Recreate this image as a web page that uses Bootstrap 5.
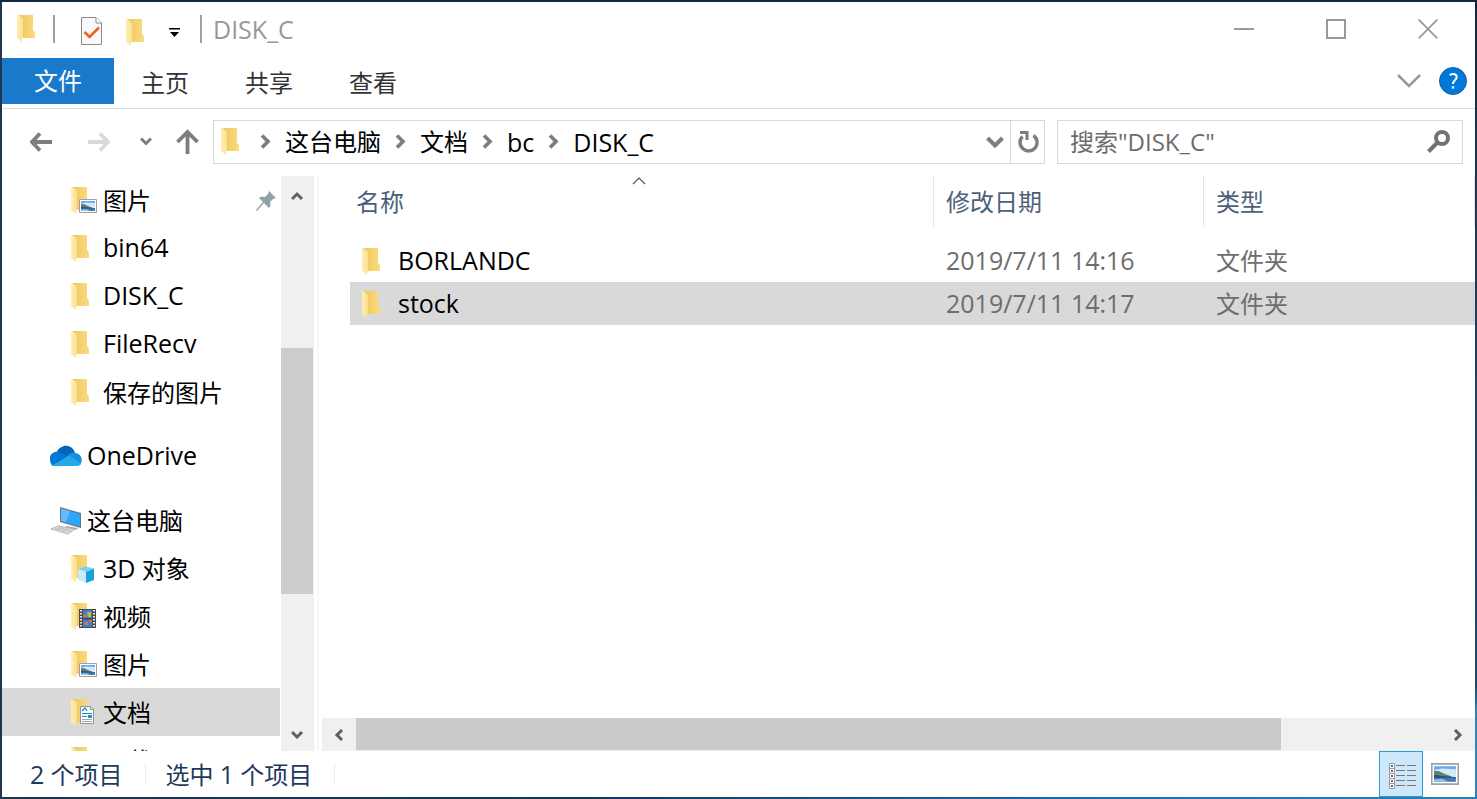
<!DOCTYPE html>
<html lang="zh-CN">
<head>
<meta charset="utf-8">
<meta name="viewport" content="width=device-width, initial-scale=1">
<title>DISK_C</title>
<link href="https://cdn.jsdelivr.net/npm/bootstrap@5.3.0/dist/css/bootstrap.min.css" rel="stylesheet">
<style>
body{font-family:"Open Sans","Noto Sans CJK SC",sans-serif;font-size:24px;line-height:32px;color:#000;background:#fff}
.frame{padding:2px;background:linear-gradient(90deg,#22344e 0,#14385a 40%,#1a6cb0 75%,#2a80b4 100%) bottom/100% 2px no-repeat,linear-gradient(#22344e,#22344e) left/2px 100% no-repeat,linear-gradient(#14253f 0,#1f3d5c 40%,#1f4a70 86%,#2f84b4 89%)}
.frame-top{height:2px;margin:-2px -2px 0;background:#14253f}
.window{background:#fff}
button{border:0;background:none;padding:0;color:inherit}
a{color:inherit;text-decoration:none}
svg{display:block;flex:none}
.latin{font-size:25px}
.titlebar{height:56px;color:#999;padding:0 1px 2px 15px}
.bar{width:2px;height:28px;background:#a0a0a0;flex:none}
.bar-a{margin:0 26px 0 17px}
.bar-b{margin:0 11px 0 20px}
.sysbtn{width:92px;height:54px}
.ribbon{height:51px;border-bottom:1px solid #dadbdc;color:#333}
.ribbon a{width:104px;height:46px;padding:9px 2px 0 0;text-align:center}
.ribbon a.file{width:112px;background:#1979ca;color:#fff;padding:7px 0 0}
.ribbon-end{gap:18px}
.addr{padding:11px 12px 12px 0}
.history{width:211px;padding-left:28px}
.forward{margin:0 28px 0 47px}
.box{height:44px;border:1px solid #d9d9d9;background:#fff}
.crumbs{gap:14px;padding-left:7px}
.crumbs .start{margin-right:6px}
.refresh{width:34px;border-left:1px solid #d9d9d9;height:42px}
.search{width:406px}
.search input{border:0;outline:0;background:none;font-size:24px;padding:0 0 0 12px;color:#6d6d6d}
.search input::placeholder{color:#6d6d6d;opacity:1}
.tree{width:278px}
.tree a{height:48px;padding:2px 0 0 69px;flex:none}
.tree a.root{padding-left:47px;margin-top:16px}
.tree .latin{padding-bottom:4px}
.tree .pic{width:32px}
.tree .root .pic{width:38px}
.picked,.picked td{background:#d9d9d9!important}
.vscroll{width:33px;background:#f0f0f0;margin-left:1px}
.vscroll .thumb{width:32px;background:#cdcdcd}
.vscroll button{height:32px}
.split{width:2px;background:#f7f7f7;margin:0 3px}
.pane{padding-left:28px}
.files{table-layout:fixed;border-collapse:separate;border-spacing:0;width:100%}
.files th{height:51px;font-weight:400;color:#4c607a;padding:2px 0 0 12px;border-right:1px solid #e5e5e5;position:relative}
.files th:first-child{padding-left:6px}
.files td{height:43px;padding:0 0 0 12px;color:#6d6d6d}
.files td:first-child{color:#000}
.files td.kind{padding-top:2px}
.files tbody::before{content:"";display:block;height:12px}
.files .pic{width:36px;padding-top:2px}
.sort{position:absolute;top:1px;left:0;right:6px}
.hscroll{height:33px;background:#f0f0f0}
.hscroll .thumb{height:32px;background:#cacaca}
.hscroll button{width:34px}
.status{height:46px;color:#1e395b}
.status .count{padding:0 22px 0 28px}
.status .chosen{padding:0 22px 0 20px}
.tick{width:1px;height:22px;background:#ededed}
.view{width:44px;height:46px}
.view.on{background:#cce8fa;border:1px solid #26a0da;padding:3px 0 0 3px}
</style>
</head>
<body>
<svg width="0" height="0" class="position-absolute" aria-hidden="true">
<defs>
<linearGradient id="gold" x1="0" x2="1"><stop offset="0" stop-color="#ecc75f"/><stop offset="1" stop-color="#fbdb7d"/></linearGradient>
<linearGradient id="pale" x1="0" x2="1"><stop offset="0" stop-color="#ffefb4"/><stop offset="1" stop-color="#fbe08c"/></linearGradient>
<symbol id="folder" viewBox="0 0 19 27"><path d="M1 0H16V15L18 17V23H5V4z" fill="url(#gold)"/><path d="M0 0H1L6 4V23H5V27L0 23z" fill="url(#pale)"/></symbol>
<symbol id="photo" viewBox="0 0 18 14"><path d="M.5.5H17.5V13.5H.5z" fill="#fff" stroke="#a0a0a0"/><path d="M2 2H16V8H2z" fill="#6ba6f6"/><path d="M2 4.500L7 3.500L16 4V8.500H6z" fill="#d3e9fb"/><path d="M2 5L5 5L9 7L13 8.500V9.500H2z" fill="#5f8474"/><path d="M2 7.500L9 8.500L16 9V10H2z" fill="#2f5568"/><path d="M2 9.500H16V12H2z" fill="#3f78bf"/><path d="M2 10.500L7 10L11 12H2z" fill="#8fc4e4"/></symbol>
</defs>
</svg>
<div class="frame vh-100 d-flex flex-column">
<div class="frame-top"></div>
<div class="window d-flex flex-column flex-grow-1 overflow-hidden">

<header class="titlebar d-flex align-items-center flex-shrink-0">
  <svg width="19" height="27"><use href="#folder"/></svg>
  <span class="bar bar-a"></span>
  <button type="button" class="mt-1" aria-label="属性"><svg width="21" height="28" viewBox="0 0 21 28"><path d="M.5.5H15L20.500 6V27.500H.5z" fill="#f8f9fb" stroke="#8a8a8a"/><path d="M15 .5V6H20.500" fill="#fff" stroke="#8a8a8a"/><path d="M3.500 15L8.500 20L18 10.500" fill="none" stroke="#f26318" stroke-width="2.600"/></svg></button>
  <button type="button" class="ms-4 mt-2" aria-label="新建文件夹"><svg width="19" height="27"><use href="#folder"/></svg></button>
  <button type="button" class="ms-4 mt-2" aria-label="自定义快速访问工具栏"><svg width="11" height="10" viewBox="0 0 11 10"><path d="M0 0H11V1.500H0zM1 4H10L5.500 9z" fill="#000"/></svg></button>
  <span class="bar bar-b"></span>
  <span class="latin flex-grow-1">DISK_C</span>
  <button type="button" class="sysbtn d-flex justify-content-center align-items-center" aria-label="最小化"><svg width="20" height="20"><path d="M0 10H20" stroke="#999" stroke-width="2"/></svg></button>
  <button type="button" class="sysbtn d-flex justify-content-center align-items-center" aria-label="最大化"><svg width="20" height="20"><path d="M1 1H19V19H1z" fill="none" stroke="#999" stroke-width="2"/></svg></button>
  <button type="button" class="sysbtn d-flex justify-content-center align-items-center" aria-label="关闭"><svg width="20" height="20"><path d="M.7.7L19.300 19.300M19.300.7L.7 19.300" stroke="#999" stroke-width="1.800"/></svg></button>
</header>

<nav class="ribbon d-flex flex-shrink-0">
  <a href="#" class="file">文件</a><a href="#">主页</a><a href="#">共享</a><a href="#">查看</a>
  <div class="ribbon-end ms-auto d-flex align-items-center me-2 pb-1">
    <button type="button" aria-label="展开功能区"><svg width="24" height="14"><path d="M1 1L12 12L23 1" fill="none" stroke="#999" stroke-width="2.500"/></svg></button>
    <button type="button" aria-label="帮助"><svg width="28" height="28" viewBox="0 0 28 28"><circle cx="14" cy="14" r="13.500" fill="#0078d7" stroke="#1760a4"/><path d="M10.700 8.200C14.500 5.800 18 7.400 17.700 10.400C17.500 13 14 13.200 14 17" fill="none" stroke="#fff" stroke-width="2"/><path d="M12.800 19.200h2.400v2.400h-2.400z" fill="#fff"/></svg></button>
  </div>
</nav>

<div class="addr d-flex align-items-center flex-shrink-0">
  <div class="history d-flex align-items-center">
    <button type="button" aria-label="后退"><svg width="23" height="20"><path d="M2 10H22M10 1.500L2 10L10 18.500" fill="none" stroke="#7d7d7d" stroke-width="3.800"/></svg></button>
    <button type="button" class="forward" aria-label="前进"><svg width="12" height="20" class="overflow-visible"><path d="M-12 10H8M0 1.500L8 10L0 18.500" fill="none" stroke="#d9d9d9" stroke-width="3.800"/></svg></button>
    <button type="button" aria-label="最近浏览的位置"><svg width="12" height="9"><path d="M1 1.500L6 6.500L11 1.500" fill="none" stroke="#7d7d7d" stroke-width="3"/></svg></button>
    <button type="button" class="ms-4" aria-label="上移"><svg width="23" height="25"><path d="M11.500 25V3M1.500 13L11.500 3L21.500 13" fill="none" stroke="#7d7d7d" stroke-width="3.800"/></svg></button>
  </div>
  <div class="box d-flex align-items-center flex-grow-1 me-2">
    <nav class="crumbs d-flex align-items-center flex-grow-1">
      <svg width="19" height="27" class="start"><use href="#folder"/></svg>
      <svg width="11" height="15"><path d="M2 1.500L8 7.500L2 13.500" fill="none" stroke="#7d7d7d" stroke-width="3.600"/></svg>
      <a href="#">这台电脑</a>
      <svg width="11" height="15"><path d="M2 1.500L8 7.500L2 13.500" fill="none" stroke="#7d7d7d" stroke-width="3.600"/></svg>
      <a href="#">文档</a>
      <svg width="11" height="15"><path d="M2 1.500L8 7.500L2 13.500" fill="none" stroke="#7d7d7d" stroke-width="3.600"/></svg>
      <a href="#" class="latin">bc</a>
      <svg width="11" height="15"><path d="M2 1.500L8 7.500L2 13.500" fill="none" stroke="#7d7d7d" stroke-width="3.600"/></svg>
      <a href="#" class="latin">DISK_C</a>
    </nav>
    <button type="button" class="me-1 pe-1" aria-label="以前的位置"><svg width="16" height="13" class="overflow-visible"><path d="M1.500 3L9 10.500L16.500 3" fill="none" stroke="#7d7d7d" stroke-width="4"/></svg></button>
    <button type="button" class="refresh d-flex align-items-center justify-content-center" aria-label="刷新"><svg width="22" height="22" viewBox="0 0 22 22"><path d="M16.500 4.500A8.500 8.500 0 1 1 5.500 5.500" fill="none" stroke="#7d7d7d" stroke-width="3.400"/><path d="M3 0H11.500V9H8.500V3H3z" fill="#7d7d7d"/></svg></button>
  </div>
  <div class="search box d-flex align-items-center ms-1 pe-2">
    <input type="search" class="flex-grow-1 w-100" aria-label="搜索" placeholder='搜索"DISK_C"'>
    <button type="button" class="me-1" aria-label="开始搜索"><svg width="23" height="23"><circle cx="15" cy="8" r="6" fill="none" stroke="#737373" stroke-width="4"/><path d="M11 12L1.500 21.500" stroke="#737373" stroke-width="4"/></svg></button>
  </div>
</div>

<main class="d-flex flex-grow-1 overflow-hidden">
  <nav class="tree d-flex flex-column flex-shrink-0 overflow-hidden">
    <a href="#" class="d-flex align-items-center"><span class="pic"><svg width="27" height="27"><use href="#folder" width="19" height="27"/><use href="#photo" x="8" y="12" width="18" height="14"/></svg></span>图片
      <svg width="20" height="20" class="ms-auto me-1 pe-none" viewBox="0 0 20 20"><path d="M13 0L20 7L17 8L14 11C15 14 14 16 13 17L8 12L1 20L0 19L7 11L3 7C5 5 8 6 9 6L12 3z" fill="#90a0a8"/></svg></a>
    <a href="#" class="d-flex align-items-center"><span class="pic"><svg width="19" height="27"><use href="#folder"/></svg></span><span class="latin">bin64</span></a>
    <a href="#" class="d-flex align-items-center"><span class="pic"><svg width="19" height="27"><use href="#folder"/></svg></span><span class="latin">DISK_C</span></a>
    <a href="#" class="d-flex align-items-center"><span class="pic"><svg width="19" height="27"><use href="#folder"/></svg></span><span class="latin">FileRecv</span></a>
    <a href="#" class="d-flex align-items-center"><span class="pic"><svg width="19" height="27"><use href="#folder"/></svg></span>保存的图片</a>
    <a href="#" class="root d-flex align-items-center"><span class="pic"><svg width="34" height="24" viewBox="0 0 34 24"><path d="M8 7C11-1 23-2 26 8L17 13z" fill="#0364b8"/><path d="M1 14C0 9 6 6 9 6.500C13 7 17 11 20 12L4 21C2 20 1 17 1 14z" fill="#0078d4"/><path d="M18 11C22 7 26 7 28 8.500C33 10 34 16 31 20z" fill="#1490df"/><path d="M4 20L20 10.500L32 18.500C31 21 29 21 27 21H8C6 21 5 21 4 20z" fill="#28a8ea"/></svg></span><span class="latin">OneDrive</span></a>
    <a href="#" class="root d-flex align-items-center"><span class="pic"><svg width="34" height="28" viewBox="0 0 34 28"><path d="M17 19L29 21L27 23L17 21z" fill="#a8adb2"/><path d="M11 0L32 6V21L11 15z" fill="#68737c"/><path d="M12 1.500L31 7V19.500L12 14z" fill="#2ea7fa"/><path d="M12 1.500L21 4L17 15.500L12 14z" fill="#64b9ff"/><path d="M2 22L9 19L26 22L19 27z" fill="#dfe2e5" stroke="#a4a8ac" stroke-width=".8"/><path d="M6 21.500L21 25M9 20.500L23 23.500M7 23.500L13 20M13 25L19 21.500" stroke="#aeb2b6" stroke-width=".7"/></svg></span>这台电脑</a>
    <a href="#" class="d-flex align-items-center"><span class="pic"><svg width="27" height="28"><use href="#folder" width="19" height="27"/><path d="M7 14L15 11.500L23 13.500L15 17z" fill="#79d2f2"/><path d="M7 14L15 17V28L7 25z" fill="#c7ebf9"/><path d="M15 17L23 13.500V25L15 28z" fill="#1b9fdb"/></svg></span><span><span class="latin">3D</span> 对象</span></a>
    <a href="#" class="d-flex align-items-center"><span class="pic"><svg width="27" height="27"><use href="#folder" width="19" height="27"/><path d="M8 6H25V25H8z" fill="#4a4a4a"/><path d="M12 7H21V15H12zM12 16.500H21V24H12z" fill="#3b82d6"/><path d="M10 7V25M23 7V25" stroke="#e8e8e8" stroke-width="2" stroke-dasharray="1.500 1.500"/><path d="M12 12H16V14H12zM13 19H17V22H14zM18 17H21V19H18z" fill="#d9782f"/><path d="M16 9H20V14H17z" fill="#d4b22d"/></svg></span>视频</a>
    <a href="#" class="d-flex align-items-center"><span class="pic"><svg width="27" height="27"><use href="#folder" width="19" height="27"/><use href="#photo" x="8" y="12" width="18" height="14"/></svg></span>图片</a>
    <a href="#" class="picked d-flex align-items-center"><span class="pic"><svg width="27" height="27"><use href="#folder" width="19" height="27"/><path d="M9.500 7.500H19L22.500 10.500V24.500H9.500z" fill="#fff" stroke="#8f979d"/><path d="M19 7.500V10.500H22.500" fill="none" stroke="#8f979d"/><path d="M11 12L14 9L16 12M11 14.500H21M11 17.500H16" fill="none" stroke="#1689ce" stroke-width="1.200"/><path d="M17 16H21V19H17z" fill="#2b8ebb"/><path d="M11 20.500H21M11 22.500H21" stroke="#a5a5a5"/></svg></span>文档</a>
    <a href="#" class="d-flex align-items-center"><span class="pic"><svg width="19" height="27"><use href="#folder"/></svg></span>下载</a>
  </nav>
  <div class="vscroll d-flex flex-column flex-shrink-0">
    <button type="button" class="mt-1 d-flex align-items-center justify-content-center" aria-label="向上滚动"><svg width="14" height="10"><path d="M1 8L6 3L11 8" fill="none" stroke="#606060" stroke-width="3"/></svg></button>
    <div style="flex:136 0 0"></div><div class="thumb" style="flex:246 0 0"></div><div style="flex:125 0 0"></div>
    <button type="button" class="d-flex align-items-center justify-content-center" aria-label="向下滚动"><svg width="14" height="10"><path d="M1 2L6 7L11 2" fill="none" stroke="#606060" stroke-width="3"/></svg></button>
  </div>
  <div class="split flex-shrink-0"></div>
  <section class="d-flex flex-column flex-grow-1 overflow-hidden">
    <div class="pane flex-grow-1 overflow-hidden">
      <table class="files">
        <colgroup><col><col style="width:270px"><col style="width:271px"></colgroup>
        <thead><tr><th scope="col">名称<span class="sort d-flex justify-content-center"><svg width="14" height="8"><path d="M1 7L7 1L13 7" fill="none" stroke="#555" stroke-width="1.200"/></svg></span></th><th scope="col">修改日期</th><th scope="col">类型</th></tr></thead>
        <tbody>
          <tr><td><div class="d-flex align-items-center"><span class="pic"><svg width="19" height="27"><use href="#folder"/></svg></span><span class="latin">BORLANDC</span></div></td><td class="latin">2019/7/11 14:16</td><td class="kind">文件夹</td></tr>
          <tr class="picked"><td><div class="d-flex align-items-center"><span class="pic"><svg width="19" height="27"><use href="#folder"/></svg></span><span class="latin">stock</span></div></td><td class="latin">2019/7/11 14:17</td><td class="kind">文件夹</td></tr>
        </tbody>
      </table>
    </div>
    <div class="hscroll d-flex flex-shrink-0">
      <button type="button" class="d-flex align-items-center justify-content-center" aria-label="向左滚动"><svg width="10" height="12"><path d="M8 1L3 6L8 11" fill="none" stroke="#606060" stroke-width="3"/></svg></button>
      <div class="thumb" style="flex:925 0 0"></div><div style="flex:160 0 0"></div>
      <button type="button" class="d-flex align-items-center justify-content-center" aria-label="向右滚动"><svg width="10" height="12"><path d="M2 1L7 6L2 11" fill="none" stroke="#606060" stroke-width="3"/></svg></button>
    </div>
  </section>
</main>

<footer class="status d-flex align-items-center flex-shrink-0">
  <span class="count"><span class="latin">2</span> 个项目</span><span class="tick"></span>
  <span class="chosen">选中 <span class="latin">1</span> 个项目</span><span class="tick"></span>
  <div class="ms-auto d-flex me-2">
    <button type="button" class="view on d-flex align-items-center justify-content-center" aria-label="详细信息"><svg width="28" height="26" viewBox="0 0 28 26"><path d="M.5.500H5.500V25.500H.5zM.5 5.500H5.500M.5 10.500H5.500M.5 15.500H5.500M.5 20.500H5.500" fill="#fff" stroke="#9a9a9a"/><path d="M2 2h2v2H2zM2 17h2v2H2zM2 22h2v2H2z" fill="#3e7fa5"/><path d="M2 7h2v2H2zM2 12h2v2H2z" fill="#96582b"/><path d="M7 2.500H16M18 2.500H27M7 7.500H16M18 7.500H27M7 12.500H16M18 12.500H27M7 17.500H16M18 17.500H27M7 22.500H16M18 22.500H27" stroke="#777"/></svg></button>
    <button type="button" class="view d-flex align-items-center justify-content-center" aria-label="大图标"><svg width="28" height="22"><use href="#photo"/></svg></button>
  </div>
</footer>
</div>
</div>
<script src="https://cdn.jsdelivr.net/npm/bootstrap@5.3.0/dist/js/bootstrap.bundle.min.js"></script>
</body>
</html>
